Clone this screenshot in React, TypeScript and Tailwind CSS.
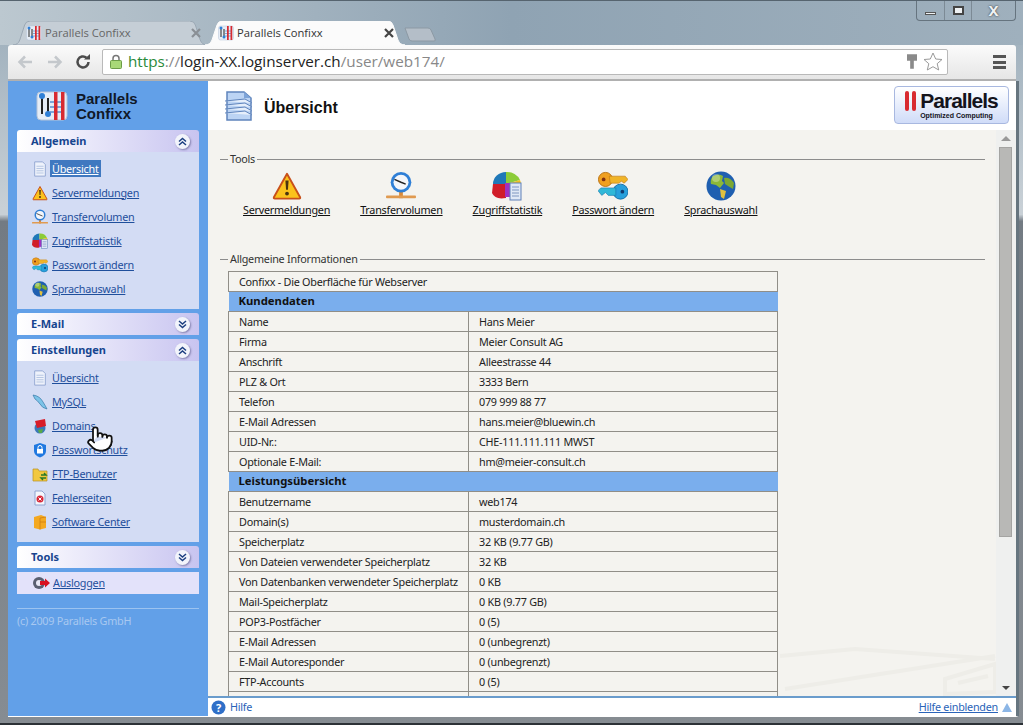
import React from "react";
import { Pointer } from "lucide-react";

function Warn({ s = 16 }: { s?: number }) {
  return (
    <svg width={s} height={s} viewBox="0 0 32 30">
      <path d="M16 2 L30 27 Q30.500 28.500 29 28.500 L3 28.500 Q1.500 28.500 2 27 Z" fill="#fbc21c" stroke="#c8501a" strokeWidth="2" strokeLinejoin="round" />
      <path d="M14.300 9 h3.400 l-.7 10 h-2 Z" fill="#4a3410" />
      <circle cx="16" cy="23" r="2" fill="#4a3410" />
    </svg>
  );
}
function Clock({ s = 16 }: { s?: number }) {
  return (
    <svg width={s} height={s} viewBox="0 0 32 30">
      <rect x="14" y="20" width="4" height="8" fill="#d98a3a" />
      <rect x="0" y="25" width="32" height="3" rx="1" fill="#e09a50" />
      <circle cx="16" cy="11" r="11" fill="#2f7fd6" />
      <circle cx="16" cy="11" r="8" fill="#f4f6fa" />
      <path d="M16 11 L9 8 M16 11 L21 13" stroke="#222" strokeWidth="1.500" />
    </svg>
  );
}
function Pie({ s = 16 }: { s?: number }) {
  return (
    <svg width={s} height={s} viewBox="0 0 30 30">
      <path d="M1 13 A13 12 0 0 1 14 1 L14 13 Z" fill="#1f78b8" />
      <path d="M14 1 A14 12 0 0 1 28 9 L14 13 Z" fill="#8ccc38" />
      <path d="M28 9 A14 12 0 0 1 29 14 L14 13 Z" fill="#f0c020" />
      <path d="M1 13 L14 13 L14 27 Q3 29 0 22 Z" fill="#d01c28" />
      <path d="M13 12 L19 12 L19 26 L13 26 Z" fill="#a030c0" />
      <rect x="18" y="12" width="11" height="17" fill="#dfe8f6" stroke="#5f80b8" />
      <path d="M20 16 h7 M20 19 h7 M20 22 h7 M20 25 h7" stroke="#7f96c0" />
    </svg>
  );
}
function Keys({ s = 16 }: { s?: number }) {
  return (
    <svg width={s} height={s} viewBox="0 0 32 30">
      <circle cx="8" cy="8" r="7.500" fill="#f0a020" stroke="#b87010" />
      <path d="M12 4.500 H29 L32 8 L28 12 L25 10 L22 12 L13 12 Z" fill="#f0b428" stroke="#b87010" strokeWidth=".6" />
      <circle cx="6" cy="8" r="2" fill="#803010" />
      <circle cx="24" cy="21" r="8" fill="#28a0dc" stroke="#1870a8" />
      <path d="M19 17 H3 L0 20 L4 25 L8 22 L11 25 L19 25 Z" fill="#30b8d8" stroke="#1870a8" strokeWidth=".6" />
      <circle cx="26" cy="21" r="2" fill="#103c70" />
    </svg>
  );
}
function Globe({ s = 16 }: { s?: number }) {
  return (
    <svg width={s} height={s} viewBox="0 0 30 30">
      <circle cx="15" cy="15" r="14.500" fill="#1f5fb0" />
      <path d="M7 5 Q13 2 17 5 L16 10 L18 12 L14 17 L10 14 L5 13 Q4 8 7 5 Z" fill="#8cb838" />
      <path d="M18 7 Q24 6 28 12 L27 18 L22 15 L19 13 Z" fill="#7ca832" />
      <path d="M14 18 L20 20 L18 28 L15 26 Z" fill="#e0c040" />
      <circle cx="10" cy="7" r="4" fill="#ffffff" opacity=".3" />
    </svg>
  );
}
function Doc({ s = 16 }: { s?: number }) {
  return (
    <svg width={s} height={s} viewBox="0 0 16 18">
      <path d="M2 1 H11 L14 4 V17 H2 Z" fill="#eef2fb" stroke="#8ea4d0" />
      <path d="M4 6 H12 M4 8.500 H12 M4 11 H12 M4 13.500 H12" stroke="#b8c8e4" strokeWidth="1.200" />
    </svg>
  );
}
function Dolphin() {
  return (
    <svg width="16" height="16" viewBox="0 0 16 16">
      <path d="M1 1 Q8 2 11 8 Q13 11 15 15 Q10 14 8 10 Q5 6 3 5 Z" fill="#7cc4e8" stroke="#3878a8" strokeWidth=".7" />
    </svg>
  );
}
function Dom() {
  return (
    <svg width="16" height="16" viewBox="0 0 16 16">
      <circle cx="8" cy="10" r="5.500" fill="#3a78b8" />
      <path d="M3 3 L13 1 L14 8 L5 10 Z" fill="#d81c28" />
      <path d="M6 12 L11 11 L10 15 L7 15 Z" fill="#58a848" />
    </svg>
  );
}
function Lock() {
  return (
    <svg width="16" height="16" viewBox="0 0 16 16">
      <path d="M8 1 L14 3 V9 Q14 13 8 15.500 Q2 13 2 9 V3 Z" fill="#1f78e0" />
      <path d="M6 7 V5.500 A2 2 0 0 1 10 5.500 V7" stroke="#fff" fill="none" />
      <rect x="5" y="7" width="6" height="4.500" fill="#fff" />
    </svg>
  );
}
function Folder() {
  return (
    <svg width="16" height="16" viewBox="0 0 16 16">
      <path d="M1 3 H6 L7 5 H15 V15 H1 Z" fill="#f2c840" stroke="#b89020" strokeWidth=".7" />
      <path d="M9 9 h5 l-2 -2 M14 12 H9 l2 2" stroke="#287828" strokeWidth="1.400" fill="none" />
    </svg>
  );
}
function ErrDoc() {
  return (
    <svg width="16" height="16" viewBox="0 0 16 16">
      <path d="M3 1 H10 L13 4 V15 H3 Z" fill="#f4f6fc" stroke="#8ea4d0" />
      <circle cx="8" cy="9" r="3.500" fill="#d82838" />
      <path d="M6.500 7.500 l3 3 M9.500 7.500 l-3 3" stroke="#fff" />
    </svg>
  );
}
function Box() {
  return (
    <svg width="16" height="16" viewBox="0 0 16 16">
      <path d="M2 3 L9 1 L14 3 V14 L8 15.500 L2 14 Z" fill="#f4a820" />
      <path d="M8 4 V15.500 M8 4 L14 3 M8 8 H14" stroke="#c87810" strokeWidth=".7" fill="none" />
    </svg>
  );
}
function Logout() {
  return (
    <svg width="18" height="14" viewBox="0 0 18 14">
      <circle cx="7" cy="7" r="6" fill="#5a5f70" />
      <circle cx="7" cy="7" r="3" fill="#e8e8f4" />
      <path d="M8 5 H13 V2.500 L18 7 L13 11.500 V9 H8 Z" fill="#d81020" />
    </svg>
  );
}

function LogoMark({ s = 32 }: { s?: number }) {
  return (
    <svg width={s} height={s} viewBox="0 0 32 32">
      <rect x="1" y="2" width="30" height="28" rx="4" fill="#e6edf6" stroke="#b6c4d8" />
      <path d="M6 6 V24" stroke="#222" strokeWidth="2" />
      <circle cx="6" cy="6" r="3" fill="#2f7fd6" />
      <path d="M12 8 V24" stroke="#222" strokeWidth="2" />
      <circle cx="12" cy="24" r="3" fill="#2f7fd6" />
      <path d="M14 12 H28 M14 17 H28 M14 22 H28" stroke="#5a8fd0" strokeWidth="1.500" />
      <rect x="18" y="2" width="3.500" height="28" fill="#d82a30" />
      <rect x="25" y="2" width="3.500" height="28" fill="#d82a30" />
    </svg>
  );
}

function Chev({ up }: { up: boolean }) {
  return (
    <span className="w-[15px] h-[15px] rounded-full bg-[#f2f4fb] shadow-[1px_1px_2px_rgba(60,60,110,0.5)] flex items-center justify-center">
      <svg width="9" height="9" viewBox="0 0 9 9" fill="none" stroke="#1c3f80" strokeWidth="1.500">
        {up ? <path d="M1 4.500 L4.500 1.500 L8 4.500 M1 8 L4.500 5 L8 8" /> : <path d="M1 1 L4.500 4 L8 1 M1 4.500 L4.500 7.500 L8 4.500" />}
      </svg>
    </span>
  );
}

function PanelHead({ title, up }: { title: string; up: boolean }) {
  return (
    <div className="h-[22px] flex items-center justify-between pl-[14px] pr-[9px] rounded-t-[3px] bg-gradient-to-r from-[#ffffff] to-[#c8c4f0]">
      <span className="text-[11px] font-bold tracking-normal text-[#17458f]">{title}</span>
      <Chev up={up} />
    </div>
  );
}

function NavItem({ icon, label, active }: { icon: React.ReactNode; label: string; active?: boolean }) {
  return (
    <div className="h-[24px] flex items-center pl-[15px]">
      <span className="w-[16px] h-[16px] flex items-center justify-center">{icon}</span>
      <span className={active ? "ml-[2px] mb-[2px] px-[2px] py-[1px] bg-[#3f78c0] text-white underline text-[10.800px] leading-[15px]" : "ml-[4px] mb-[2px] underline text-[#1f4f9c] text-[10.800px] leading-[15px]"}>{label}</span>
    </div>
  );
}

function Legend({ title }: { title: string }) {
  return (
    <div className="flex items-center gap-[2px] text-[10.800px] text-[#333] h-[14px]">
      <span className="w-[8px] h-px bg-[#8c8c8c]" />
      <span>{title}</span>
      <span className="flex-1 h-px bg-[#8c8c8c]" />
    </div>
  );
}

function Tool({ icon, label }: { icon: React.ReactNode; label: string }) {
  return (
    <div className="flex flex-col items-center">
      <div className="h-[30px] flex items-center">{icon}</div>
      <span className="mt-[1px] text-[10.800px] leading-[15px] text-[#111] underline">{label}</span>
    </div>
  );
}

const rows: [string, string?][] = [
  ["#Kundendaten"],
  ["Name", "Hans Meier"],
  ["Firma", "Meier Consult AG"],
  ["Anschrift", "Alleestrasse 44"],
  ["PLZ & Ort", "3333 Bern"],
  ["Telefon", "079 999 88 77"],
  ["E-Mail Adressen", "hans.meier@bluewin.ch"],
  ["UID-Nr.:", "CHE-111.111.111 MWST"],
  ["Optionale E-Mail:", "hm@meier-consult.ch"],
  ["#Leistungsübersicht"],
  ["Benutzername", "web174"],
  ["Domain(s)", "musterdomain.ch"],
  ["Speicherplatz", "32 KB (9.77 GB)"],
  ["Von Dateien verwendeter Speicherplatz", "32 KB"],
  ["Von Datenbanken verwendeter Speicherplatz", "0 KB"],
  ["Mail-Speicherplatz", "0 KB (9.77 GB)"],
  ["POP3-Postfächer", "0 (5)"],
  ["E-Mail Adressen", "0 (unbegrenzt)"],
  ["E-Mail Autoresponder", "0 (unbegrenzt)"],
  ["FTP-Accounts", "0 (5)"],
  ["", ""],
];

function Tab({ active, label }: { active?: boolean; label: string }) {
  return (
    <div className={active ? "relative w-[200px] h-[24px] -ml-[2px] z-10 flex items-center" : "relative w-[194px] h-[24px] flex items-center"}>
      <svg className="absolute inset-0 w-full h-full" viewBox="0 0 200 24" preserveAspectRatio="none">
        <path d="M0 24 Q5 24 7 19 L12 4 Q13 0 18 0 H182 Q187 0 188 4 L193 19 Q195 24 200 24 Z" fill={active ? "#fbfbfb" : "#c5ced6"} stroke={active ? "#fbfbfb" : "#9aa8b4"} />
      </svg>
      <span className="relative ml-[13px] flex items-center gap-[3px] flex-1">
        <LogoMark s={16} />
        <span className={active ? "text-[11.200px] text-[#333]" : "text-[11.200px] text-[#666]"}>{label}</span>
      </span>
      <svg width="10" height="10" viewBox="0 0 10 10" className={active ? "relative mr-[11px]" : "relative mr-[6px]"} stroke={active ? "#444" : "#8a8f95"} strokeWidth="2.200">
        <path d="M1 1 L9 9 M9 1 L1 9" />
      </svg>
    </div>
  );
}

export default function App() {
  return (
    <div className="w-[1023px] h-[725px] overflow-hidden flex flex-col bg-gradient-to-r from-[#bcc8d0] via-[#8fa3b3] to-[#9fb0bd] font-['Noto_Sans',sans-serif] tracking-[-0.25px]">
      {/* title bar */}
      <div className="h-[45px] flex items-start justify-between pl-[13px] pr-[7px] shrink-0 border-t border-[#56646f] tracking-normal">
        <div className="flex items-center pt-[20px] font-['Open_Sans',sans-serif]">
          <Tab label="Parallels Confixx" />
          <Tab active label="Parallels Confixx" />
          <svg width="33" height="15" viewBox="0 0 33 15" className="-ml-[1px] mt-[2px]">
            <path d="M1 1 H24 Q26 1 27 3 L31 12 Q32 14 30 14 H8 Q6 14 5 12 Z" fill="#b4bec8" stroke="#8c99a4" />
          </svg>
        </div>
        <div className="w-[100px] h-[20px] border border-t-0 border-[#66747f] rounded-b-[4px] flex text-[#333]">
          <div className="w-[28px] flex items-center justify-center border-r border-[#7c8a95]"><span className="w-[11px] h-[3px] mt-[5px] bg-[#eef1f3] border border-[#555]" /></div>
          <div className="w-[27px] flex items-center justify-center border-r border-[#7c8a95]"><span className="w-[11px] h-[9px] bg-[#eef1f3] border-2 border-[#444]" /></div>
          <div className="flex-1 flex items-center justify-center text-[15px] font-bold text-[#eef1f3] [text-shadow:0_0_2px_#222]">X</div>
        </div>
      </div>
      {/* window frame and body */}
      <div className="flex-1 min-h-0 pl-[8px] pr-[4px] pb-[6px] flex flex-col border-b-[2px] border-[#2c3136] bg-[linear-gradient(180deg,#a3b3bf_0%,#c8d0d6_24%,#c8d0d6_25%,#737b83_26%,#868c92_100%)]">
        {/* toolbar */}
        <div className="h-[36px] shrink-0 mr-[3px] bg-gradient-to-b from-[#fbfbfb] to-[#e6e6e6] border-b-2 border-[#b0b0b0] flex items-center pl-[9px] pr-[7px] rounded-t-[3px] tracking-normal">
          <svg width="16" height="14" viewBox="0 0 16 14" fill="none" stroke="#c4c8cc" strokeWidth="2.500"><path d="M15 7 H3 M8 1.500 L2.500 7 L8 12.500" /></svg>
          <svg width="16" height="14" viewBox="0 0 16 14" fill="none" stroke="#c4c8cc" strokeWidth="2.500" className="ml-[14px]"><path d="M1 7 H13 M8 1.500 L13.500 7 L8 12.500" /></svg>
          <svg width="16" height="16" viewBox="0 0 16 16" fill="none" stroke="#4c4c4c" strokeWidth="2.500" className="ml-[12px]"><path d="M13.500 8 A5.500 5.500 0 1 1 11.500 3.700" /><path d="M9 5.500 H15 V0 Z" fill="#4c4c4c" stroke="none" /></svg>
          <div className="ml-[11px] w-[846px] h-[26px] mb-[1px] bg-white border border-[#b9b9b9] rounded-[2px] flex items-center pl-[7px] pr-[4px] font-['Open_Sans',sans-serif]">
            <svg width="12" height="15" viewBox="0 0 12 15"><path d="M3 7 V4.500 A3 3 0 0 1 9 4.500 V7" fill="none" stroke="#777" strokeWidth="1.500" /><rect x=".500" y="6.500" width="11" height="8" rx="1" fill="#a8d878" stroke="#6c9c48" /></svg>
            <span className="ml-[6px] text-[15.250px] leading-none">
              <span className="text-[#2a8a3a]">https</span><span className="text-[#888]">://</span><span className="text-[#222]">login-XX.loginserver.ch</span><span className="text-[#888]">/user/web174/</span>
            </span>
            <span className="flex-1" />
            <svg width="10" height="16" viewBox="0 0 11 17"><path d="M0 0 H11 V7 H7.500 V16 H3.500 V7 H0 Z" fill="#8a8a8a" /></svg>
            <svg width="20" height="19" viewBox="0 0 20 19" className="ml-[6px]" fill="#fff" stroke="#9a9a9a"><path d="M10 1 L12.700 7 L19 7.500 L14.200 11.700 L15.700 18 L10 14.700 L4.300 18 L5.800 11.700 L1 7.500 L7.300 7 Z" /></svg>
          </div>
          <span className="flex-1" />
          <div className="flex flex-col gap-[2.500px] mr-[3px]">
            <span className="w-[13px] h-[3px] bg-[#555]" />
            <span className="w-[13px] h-[3px] bg-[#555]" />
            <span className="w-[13px] h-[3px] bg-[#555]" />
          </div>
        </div>
        {/* page */}
        <div className="flex-1 min-h-0 flex border-r-[3px] border-r-[#66757f] border-b border-b-white">
          {/* sidebar */}
          <aside className="w-[200px] shrink-0 bg-[#62a0e8] px-[9px] relative">
            <div className="h-[49px] flex items-center pl-[19px] gap-[8px]">
              <LogoMark s={32} />
              <div className="font-['Liberation_Sans',sans-serif] tracking-normal font-bold text-[15px] leading-[15px] text-[#101828]">Parallels<br />Confixx</div>
            </div>
            <PanelHead title="Allgemein" up />
            <div className="bg-[#d3dcf4] pt-[5px] pb-[8px]">
              <NavItem icon={<Doc />} label="Übersicht" active />
              <NavItem icon={<Warn />} label="Servermeldungen" />
              <NavItem icon={<Clock />} label="Transfervolumen" />
              <NavItem icon={<Pie />} label="Zugriffstatistik" />
              <NavItem icon={<Keys />} label="Passwort ändern" />
              <NavItem icon={<Globe />} label="Sprachauswahl" />
            </div>
            <div className="mt-[4px]"><PanelHead title="E-Mail" up={false} /></div>
            <div className="mt-[4px]"><PanelHead title="Einstellungen" up /></div>
            <div className="bg-[#d3dcf4] pt-[5px] pb-[8px]">
              <NavItem icon={<Doc />} label="Übersicht" />
              <NavItem icon={<Dolphin />} label="MySQL" />
              <NavItem icon={<Dom />} label="Domains" />
              <NavItem icon={<Lock />} label="Passwortschutz" />
              <NavItem icon={<Folder />} label="FTP-Benutzer" />
              <NavItem icon={<ErrDoc />} label="Fehlerseiten" />
              <NavItem icon={<Box />} label="Software Center" />
            </div>
            <div className="mt-[4px]"><PanelHead title="Tools" up={false} /></div>
            <div className="mt-[4px] h-[22px] bg-[#e3e2fa] flex items-center pl-[15px]">
              <Logout />
              <span className="ml-[3px] mb-[1px] underline text-[#1f4f9c] text-[10.800px] leading-[15px]">Ausloggen</span>
            </div>
            <div className="mt-[14px] h-px bg-[#9cc3f0]" />
            <div className="mt-[4px] text-[10.800px] leading-[15px] text-[#a8c8f0]">(c) 2009 Parallels GmbH</div>
            <Pointer className="absolute left-[78px] top-[342px] w-[28px] h-[32px]" fill="#ffffff" stroke="#111111" strokeWidth={1.500} />
          </aside>
          {/* main */}
          <main className="flex-1 min-w-0 flex flex-col">
            <div className="h-[49px] shrink-0 bg-white flex items-center pl-[16px] pr-[7px]">
              <svg width="30" height="32" viewBox="0 0 30 32">
                <path d="M3 2 H20 L27 8 V30 H3 Z" fill="#bcd4f4" stroke="#5f84bc" strokeWidth="1.500" />
                <path d="M1 11 L21 9 L28 13 M1 15 L21 13 L28 17 M1 19 L21 17 L28 21 M1 23 L21 21 L28 25" stroke="#5f84bc" fill="#e6effb" />
                <path d="M20 2 V8 H27 Z" fill="#7ea4d8" />
              </svg>
              <h1 className="ml-[10px] mt-[5px] font-['Liberation_Sans',sans-serif] tracking-normal font-bold text-[16px] text-[#111]">Übersicht</h1>
              <span className="flex-1" />
              <div className="w-[115px] h-[38px] mb-[1px] rounded-[4px] border border-[#a8b8e0] bg-gradient-to-b from-[#ffffff] to-[#d0dcf8] flex flex-col items-center justify-center font-['Liberation_Sans',sans-serif] text-[#14141c]">
                <div className="flex items-center gap-[3px] leading-none">
                  <span className="w-[4px] h-[20px] bg-[#d82a30] rounded-[2px]" />
                  <span className="w-[4px] h-[20px] bg-[#d82a30] rounded-[2px] mr-[1px]" />
                  <span className="text-[21px] font-bold tracking-[-1px]">Parallels</span>
                </div>
                <span className="text-[7px] font-bold tracking-normal leading-[9px] ml-[10px]">Optimized Computing</span>
              </div>
            </div>
            <div className="flex-1 min-h-0 bg-[#f4f3ef] flex relative overflow-hidden">
              <svg className="absolute right-[3px] bottom-0" width="480" height="70" viewBox="0 0 480 70" fill="none" stroke="#eeede8" strokeWidth="4">
                <path d="M247 30 L322 23 L462 33 M252 63 L462 30" />
                <path d="M412 53 L462 38 V66 L412 68 Z" />
                <path d="M425 57 L455 50" />
              </svg>
              <div className="flex-1 min-w-0 pl-[12px] pr-[11px] pt-[22px] relative">
                <Legend title="Tools" />
                <div className="flex gap-[30px] pl-[23px] pt-[5px]">
                  <Tool icon={<Warn s={30} />} label="Servermeldungen" />
                  <Tool icon={<Clock s={30} />} label="Transfervolumen" />
                  <Tool icon={<Pie s={30} />} label="Zugriffstatistik" />
                  <Tool icon={<Keys s={30} />} label="Passwort ändern" />
                  <Tool icon={<Globe s={30} />} label="Sprachauswahl" />
                </div>
                <div className="mt-[35px]"><Legend title="Allgemeine Informationen" /></div>
                <table className="ml-[8px] mt-[5px] w-[550px] table-fixed border-collapse text-[10.800px] leading-[15px] text-[#222]">
                  <colgroup>
                    <col className="w-[240px]" />
                    <col />
                  </colgroup>
                  <tbody>
                    <tr className="h-[20px]"><td colSpan={2} className="border border-[#908e88] pl-[10px] py-0">Confixx - Die Oberfläche für Webserver</td></tr>
                    {rows.map(([a, b], i) =>
                      a.startsWith("#") ? (
                        <tr key={i} className="h-[20px] bg-[#7aaeed]"><td colSpan={2} className="pl-[10px] pb-[2px] font-bold tracking-normal text-[11.300px] text-[#111] py-0">{a.slice(1)}</td></tr>
                      ) : (
                        <tr key={i} className="h-[20px]">
                          <td className="border border-[#908e88] pl-[10px] py-0 whitespace-nowrap">{a}</td>
                          <td className="border border-[#908e88] pl-[10px] py-0">{b}</td>
                        </tr>
                      )
                    )}
                  </tbody>
                </table>
              </div>
              {/* scrollbar */}
              <div className="w-[20px] shrink-0 flex flex-col items-start pl-[3px] bg-[#eff0ef] relative">
                <div className="h-[17px] w-[13px] flex items-center justify-center"><span className="border-x-[5px] border-x-transparent border-b-[5px] border-b-[#999]" /></div>
                <div className="w-[13px] h-[390px] bg-[#b8b8b6] border border-[#a4a4a2]" />
                <div className="flex-1" />
                <div className="h-[17px] w-[13px] flex items-center justify-center"><span className="border-x-[4px] border-x-transparent border-t-[4px] border-t-[#444]" /></div>
              </div>
            </div>
            <div className="h-[20px] shrink-0 bg-white border-t-2 border-[#6a9ccc] flex items-center pl-[3px] pr-[4px] text-[10.800px] text-[#2a63b8]">
              <svg width="15" height="15" viewBox="0 0 15 15"><circle cx="7.500" cy="7.500" r="7" fill="#2f6fc8" /><text x="7.500" y="11.500" fontSize="11" fontWeight="bold" fill="#fff" textAnchor="middle">?</text></svg>
              <span className="ml-[4px]">Hilfe</span>
              <span className="flex-1" />
              <span className="underline">Hilfe einblenden</span>
              <span className="ml-[4px] border-x-[5px] border-x-transparent border-b-[9px] border-b-[#8cb6e6]" />
            </div>
          </main>
        </div>
      </div>
    </div>
  );
}
